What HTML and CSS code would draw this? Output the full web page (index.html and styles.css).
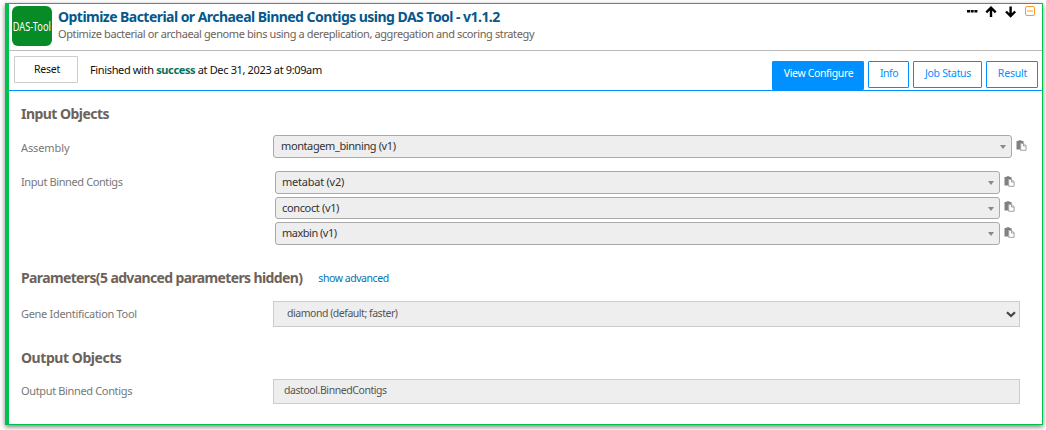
FILE: index.html
```
<!DOCTYPE html>
<html lang="en">
<head>
<meta charset="utf-8">
<title>DAS Tool</title>
<link rel="stylesheet" href="styles.css">
</head>
<body>
<svg class="defs" width="0" height="0"><defs>
<symbol id="paste" viewBox="0 0 11 11"><path fill="#808080" d="M.5 1h2V.3h3V1h2v2H4.500v6.500h-4z"/><path fill="#fff" stroke="#8a8a8a" stroke-width=".8" d="M4.700 3.400h3l2.400 2.400v4.500H4.700z"/><path fill="none" stroke="#8a8a8a" stroke-width=".8" d="M7.500 3.500v2.500H10"/></symbol>
</defs></svg>
<main class="cell">
  <header class="head">
    <div class="logo"><span class="t logo-text">DAS-Tool</span></div>
    <div class="titles">
      <h1><span class="t title">Optimize Bacterial or Archaeal Binned Contigs using DAS Tool - v1.1.2</span></h1>
      <p><span class="t sub">Optimize bacterial or archaeal genome bins using a dereplication, aggregation and scoring strategy</span></p>
    </div>
    <svg class="tools" width="72" height="14" viewBox="0 0 72 14">
      <path d="M1 5h3v2.500H1zM4.700 5h3v2.500h-3zM8.400 5h3v2.500h-3z"/>
      <path d="M25 2.500V12M20.300 7.300L25 2.700l4.700 4.600M44.600 1.500V11M40 6.500l4.600 4.500L49.200 6.500" fill="none" stroke="#000" stroke-width="2.400"/>
      <rect x="59.500" y="1.500" width="9" height="9" rx="1.500" fill="none" stroke="#f79a2e"/><path d="M61 5.500h6v1h-6z" fill="#f79a2e"/>
    </svg>
  </header>
  <div class="bar">
    <button class="reset"><span class="t rs">Reset</span></button>
    <div class="status"><span class="t st">Finished with <b>success</b> at Dec 31, 2023 at 9:09am</span></div>
    <nav class="tabs">
      <button class="tab active"><span class="t t1">View Configure</span></button>
      <button class="tab info"><span class="t t2">Info</span></button>
      <button class="tab job"><span class="t t3">Job Status</span></button>
      <button class="tab result"><span class="t t4">Result</span></button>
    </nav>
  </div>
  <section class="inputs">
    <h2><span class="t h-in">Input Objects</span></h2>
    <div class="row assembly">
      <label><span class="t l1">Assembly</span></label>
      <div class="line"><div class="select"><span class="t s1">montagem_binning (v1)</span><i class="tri"></i></div><svg class="paste"><use href="#paste"/></svg></div>
    </div>
    <div class="row bins">
      <label><span class="t l2">Input Binned Contigs</span></label>
      <div class="list">
        <div class="line"><div class="select"><span class="t s2">metabat (v2)</span><i class="tri"></i></div><svg class="paste"><use href="#paste"/></svg></div>
        <div class="line mid"><div class="select"><span class="t s3">concoct (v1)</span><i class="tri"></i></div><svg class="paste"><use href="#paste"/></svg></div>
        <div class="line"><div class="select"><span class="t s4">maxbin (v1)</span><i class="tri"></i></div><svg class="paste"><use href="#paste"/></svg></div>
      </div>
    </div>
  </section>
  <section class="params">
    <h2><span class="t h-par">Parameters(5 advanced parameters hidden)</span><a><span class="t adv">show advanced</span></a></h2>
    <div class="row">
      <label><span class="t l3">Gene Identification Tool</span></label>
      <div class="field drop"><span class="t f1">diamond (default; faster)</span><svg class="chev" width="10" height="7" viewBox="0 0 10 7"><path d="M1 1.300l4 3.800 4-3.800" fill="none" stroke="#444" stroke-width="2.200"/></svg></div>
    </div>
  </section>
  <section class="outputs">
    <h2><span class="t h-out">Output Objects</span></h2>
    <div class="row">
      <label><span class="t l4">Output Binned Contigs</span></label>
      <div class="field"><span class="t f2">dastool.BinnedContigs</span></div>
    </div>
  </section>
</main>
</body>
</html>
```
FILE: styles.css
```
* { box-sizing: border-box; }
body { margin: 0; height: 430px; display: flow-root; background: #fff; font: 11px "Noto Sans", sans-serif; color: #111; overflow: hidden; }
.defs { display: block; }
h1, h2, p { margin: 0; }
button { padding: 0; font: inherit; background: #fff; color: #111; }
.t { white-space: nowrap; }
.cell { margin: 3px 3px 0 5px; height: 422px; border: 1px solid #00c14e; border-left-width: 4px; box-shadow: 0 2px 5px rgba(0,0,0,.5); background: #fff; }
.head { display: flex; height: 47px; padding: 2px 4px 0 3px; border-bottom: 1px solid #bbb; }
.logo { width: 40px; height: 40px; border-radius: 6px; background: #068b26; color: #fff; display: flex; align-items: center; justify-content: center; font-size: 12px; }
.logo-text { transform: scaleX(.77); }
.titles { flex: 1; padding-left: 6px; }
h1 { font-size: 14px; line-height: 20px; color: #05588c; padding-top: 1px; }
p { line-height: 14px; color: #6d6259; }
.title { letter-spacing: -.54px; }
.sub { letter-spacing: -.39px; }
.tools { margin-top: -1px; }
.bar { display: flex; height: 40px; padding: 5px 4px 0 5px; border-bottom: 1px solid #0090ff; }
.reset { width: 64px; height: 27px; border: 1px solid #ccc; border-radius: 1px; padding: 0 0 3px 2px; }
.rs { font-size: 10.5px; letter-spacing: -.25px; }
.status { margin-left: 12px; line-height: 28px; flex: 1; }
.status b { color: #08705c; }
.st { letter-spacing: -.36px; }
.tabs { display: flex; gap: 4px; padding-top: 5px; }
.tab { height: 27px; border: 1px solid #0090ff; border-radius: 1px; color: #0090ff; font-size: 10.5px; padding: 0 0 3px 1px; }
.tab.active { width: 92px; height: 29px; background: #0090ff; color: #fff; padding-bottom: 5px; }
.info { width: 41px; }
.job { width: 69px; }
.result { width: 52px; }
.t1 { letter-spacing: -.36px; }
.t2 { letter-spacing: -.5px; }
.t3 { letter-spacing: -.32px; }
.t4 { letter-spacing: -.2px; }
section { padding-left: 12px; }
h2 { font-size: 14px; line-height: 20px; color: #6d6259; display: flex; align-items: center; }
.h-in { letter-spacing: -.54px; }
.h-par { letter-spacing: -.63px; }
.h-out { letter-spacing: -.45px; }
.inputs { padding-top: 13px; height: 177px; }
.params { height: 80px; }
.row { display: flex; color: #777; }
label { width: 252px; flex: none; line-height: 22px; }
.l1 { letter-spacing: -.1px; }
.l2 { letter-spacing: -.4px; }
.l3 { letter-spacing: -.3px; }
.l4 { letter-spacing: -.35px; }
.line { display: flex; gap: 4px; }
.assembly { margin-top: 11px; }
.assembly label { padding-top: 2px; }
.bins { margin-top: 12px; }
.list { padding-left: 2px; display: flex; flex-direction: column; }
.mid { margin: 3px 0; }
.select { width: 725px; height: 23px; border: 1px solid #aaa; border-radius: 3px; background: #eee; color: #333; padding: 0 5px 2px 6px; display: flex; align-items: center; justify-content: space-between; }
.assembly .select { width: 739px; padding-left: 7px; }
.mid .select { height: 22px; padding-bottom: 1px; }
.s1 { letter-spacing: -.4px; }
.s2 { letter-spacing: -.24px; }
.s3 { letter-spacing: -.35px; }
.s4 { letter-spacing: -.5px; }
.tri { border: 3px solid transparent; border-top: 4px solid #888; border-bottom: 0; margin-top: 3px; }
.paste { width: 11px; height: 11px; margin-top: 5px; }
.mid .paste { margin-top: 4px; }
a { font-weight: 400; font-size: 10.5px; color: #0672b0; margin-left: 16px; }
.adv { letter-spacing: -.44px; }
.field { width: 747px; height: 25px; border: 1px solid #ccc; background: #eee; color: #555; padding: 0 3px 3px 10px; display: flex; align-items: center; justify-content: space-between; font-size: 10.5px; }
.f1 { letter-spacing: -.47px; }
.f2 { letter-spacing: -.43px; }
.params .row { margin-top: 13px; }
.params label { padding-top: 2px; }
.drop { height: 26px; padding-left: 13px; padding-bottom: 2px; }
.chev { margin-top: 2px; }
.outputs .row { margin-top: 11px; }
.outputs label { padding-top: 1px; }
```
